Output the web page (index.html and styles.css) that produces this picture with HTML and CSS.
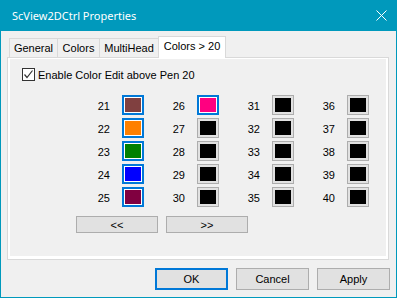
FILE: index.html
```html
<!DOCTYPE html>
<html lang="en">
<head>
  <meta charset="UTF-8">
  <title>ScView2DCtrl Properties</title>
  <link rel="stylesheet" href="styles.css">
</head>
<body>
  <div class="window">
    <div class="titlebar">
      <span class="title">ScView2DCtrl Properties</span>
      <svg class="close" width="11" height="11" viewBox="0 0 11 11">
        <path d="M0.5 0.5 L10.5 10.5 M10.5 0.5 L0.5 10.5" stroke="#fff" stroke-width="1" fill="none"/>
      </svg>
    </div>
    <div class="content">
      <div class="tabs">
        <span class="tab tab-general">General</span>
        <span class="tab tab-colors">Colors</span>
        <span class="tab tab-multi">MultiHead</span>
        <span class="tab tab-more active">Colors &gt; 20</span>
      </div>
      <div class="panel">
        <div class="page">
          <label class="check">
            <span class="box">
              <svg width="11" height="11" viewBox="0 0 11 11">
                <path d="M1.5 5.5 L4 8.5 L9.5 1.5" stroke="#333" stroke-width="1.2" fill="none"/>
              </svg>
            </span>
            Enable Color Edit above Pen 20
          </label>
          <div class="pens"></div>
          <div class="nav">
            <button class="btn nav-btn">&lt;&lt;</button>
            <button class="btn nav-btn">&gt;&gt;</button>
          </div>
        </div>
      </div>
      <div class="actions">
        <button class="btn default">OK</button>
        <button class="btn">Cancel</button>
        <button class="btn">Apply</button>
      </div>
    </div>
  </div>
  <script>
    // pens 21..40, only the first six have a colour set
    let colors = ['#804040', '#ff8000', '#008000', '#0000ff', '#800040', '#ff0080']
    let $pens = document.querySelector('.pens')

    for (let c = 0; c < 4; c++) {
      let $col = document.createElement('div')
      $col.className = 'pen-col'
      for (let r = 0; r < 5; r++) {
        let i = c * 5 + r
        let $row = document.createElement('div')
        $row.className = 'pen'
        let $num = document.createElement('span')
        $num.className = 'num'
        $num.textContent = 21 + i
        let $sw = document.createElement('span')
        $sw.className = colors[i] ? 'swatch set' : 'swatch'
        let $fill = document.createElement('span')
        $fill.className = 'fill'
        $fill.style.background = colors[i] || '#000'
        $sw.appendChild($fill)
        $row.appendChild($num)
        $row.appendChild($sw)
        $col.appendChild($row)
      }
      $pens.appendChild($col)
    }
  </script>
</body>
</html>
```

FILE: styles.css
```css
html, body {
  margin: 0;
  padding: 0;
}
body {
  font-family: "Liberation Sans", Arial, sans-serif;
  font-size: 11px;
  color: #000;
}

.window {
  width: 397px;
  height: 298px;
  box-sizing: border-box;
  border: 1px solid #0099bc;
  border-top: none;
  background: #f0f0f0;
  display: flex;
  flex-direction: column;
}
.titlebar {
  height: 31px;
  flex: none;
  background: #0099bc;
  color: #fff;
  display: flex;
  align-items: center;
  justify-content: space-between;
  padding: 0 9px 0 11px;
}
.title {
  font-family: "Noto Sans", "Open Sans", sans-serif;
  font-size: 11px;
  margin-top: -1px;
}
.close {
  display: block;
  margin-top: -1px;
}

.content {
  flex: 1;
  padding: 5px 6px 0 6px;
  display: flex;
  flex-direction: column;
}

.tabs {
  display: flex;
  align-items: flex-end;
  height: 21px;
  padding-left: 2px;
}
.tab {
  box-sizing: border-box;
  height: 19px;
  border: 1px solid #d9d9d9;
  border-bottom: none;
  margin-right: -1px;
  text-align: center;
  line-height: 19px;
}
.tab-general { width: 49px; }
.tab-colors { width: 43px; }
.tab-multi { width: 60px; }
.tab-more { width: 68px; }
.tab.active {
  position: relative;
  z-index: 1;
  height: 22px;
  margin-bottom: -1px;
  background: #fff;
  line-height: 19px;
}

.panel {
  height: 203px;
  width: 382px;
  box-sizing: border-box;
  border: 1px solid #d9d9d9;
  background: #fff;
  padding: 1px 2px 3px 2px;
}
.page {
  height: 100%;
  background: #f0f0f0;
  box-sizing: border-box;
  padding: 9px 0 0 12px;
}

.check {
  display: flex;
  align-items: center;
  gap: 3px;
  height: 13px;
}
.box {
  width: 13px;
  height: 13px;
  box-sizing: border-box;
  border: 1px solid #333;
  background: #fff;
  display: flex;
  align-items: center;
  justify-content: center;
}
.box svg {
  display: block;
}

.pens {
  display: flex;
  gap: 11px;
  margin: 14px 0 0 58px;
}
.pen-col {
  display: flex;
  flex-direction: column;
  gap: 3px;
}
.pen {
  display: flex;
  align-items: center;
  gap: 12px;
  height: 20px;
}
.num {
  width: 30px;
  text-align: right;
  padding-top: 1px;
}
.swatch {
  width: 22px;
  height: 20px;
  box-sizing: border-box;
  border: 1px solid #adadad;
  background: #e1e1e1;
  padding: 2px;
  display: flex;
}
.swatch.set {
  border: 2px solid #0078d7;
  background: #fff;
  padding: 1px;
}
.fill {
  flex: 1;
}

.btn {
  box-sizing: border-box;
  border: 1px solid #adadad;
  background: #e1e1e1;
  font-family: "Liberation Sans", Arial, sans-serif;
  font-size: 11px;
  color: #000;
  padding: 0;
  margin: 0;
}
.nav {
  display: flex;
  gap: 8px;
  margin: 9px 0 0 54px;
}
.nav-btn {
  width: 82px;
  height: 17px;
  line-height: 14px;
}

.actions {
  display: flex;
  justify-content: flex-end;
  gap: 8px;
  margin-top: 8px;
}
.actions .btn {
  width: 73px;
  height: 22px;
}
.actions .btn.default {
  border: 2px solid #0078d7;
}
```
